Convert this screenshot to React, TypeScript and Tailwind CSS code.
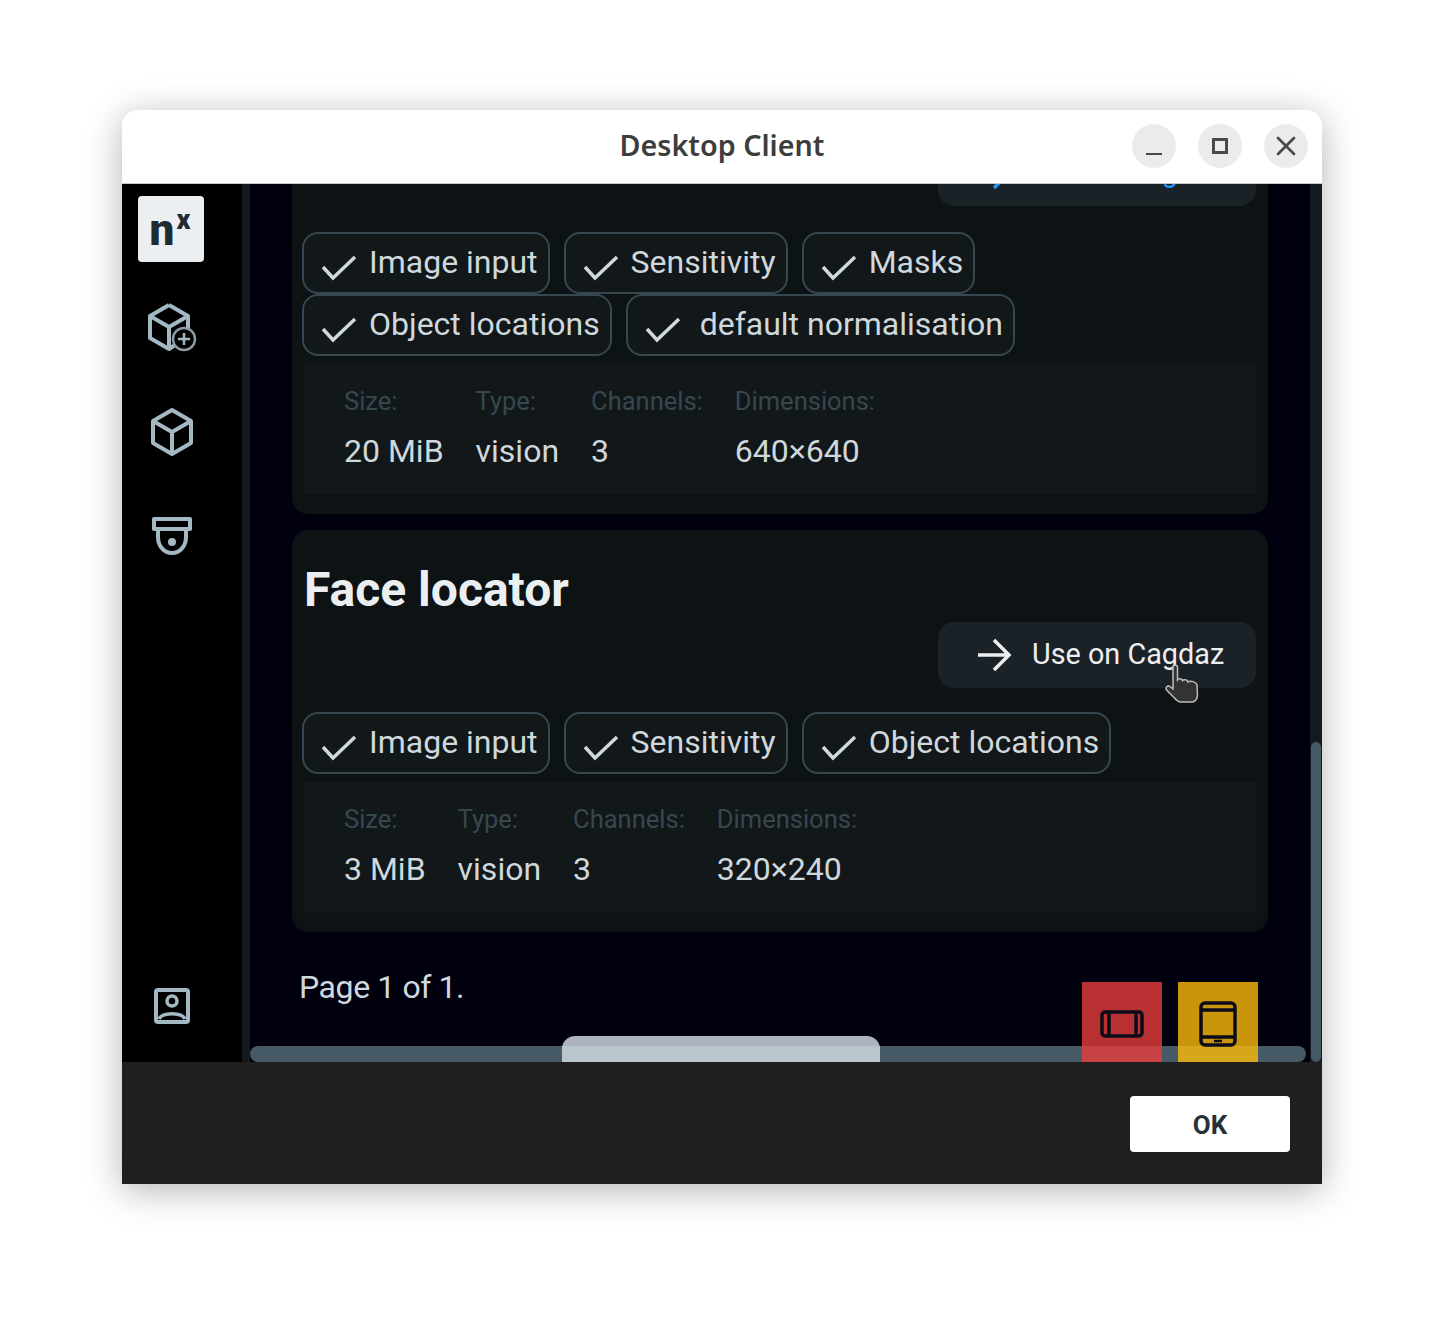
import React from 'react';
import { X } from 'lucide-react';

const FONT = { fontFamily: 'Roboto, sans-serif' };

const CheckMark = () => (
  <svg width="36" height="28" viewBox="0 0 36 28" fill="none" className="mt-[20px] shrink-0">
    <path d="M2 13 L12 24 L34 3" stroke="#cfd8dc" strokeWidth="3.5" />
  </svg>
);

const Arrow = ({ color }: { color: string }) => (
  <svg width="36" height="36" viewBox="0 0 36 36" fill="none" className="shrink-0">
    <path d="M2 18 H33 M18 3 L33 18 L18 33" stroke={color} strokeWidth="3.5" />
  </svg>
);

const Tag = ({ label, wide }: { label: string; wide?: boolean }) => (
  <div className="flex h-[62px] items-start rounded-[16px] border-2 border-[#37474f] bg-[#12171a] pl-[17px] pr-[10px]">
    <CheckMark />
    <span className={`mt-[6px] text-[32px] leading-[44px] text-[#cfd8dc] ${wide ? 'ml-[19px]' : 'ml-[12px]'}`}>{label}</span>
  </div>
);

const UseButton = ({ color, cursor }: { color: string; cursor?: boolean }) => (
  <div className="relative flex h-[66px] w-[318px] items-center gap-[20px] rounded-[16px] bg-[#1a2227] pl-[38px]">
    <Arrow color={color} />
    <span className="text-[28.8px]" style={{ color }}>Use on Cagdaz</span>
    {cursor && (
      <svg width="36" height="40" viewBox="0 0 36 40" className="absolute left-[226px] top-[42px]">
        <path
          d="M9 3 C9 0.5 13.5 0.5 13.5 3 V16 C15 14 18 14.5 18.5 16.5 C20 15 23.5 15.5 24 18 C26 16.5 32 17.5 33 21 L33.500 31 C33.500 35 31 38 28 38 H17 C14 38 12 36 10 33.500 L2.500 26 C1 23.500 3.500 21 6 22.500 L9 25 Z"
          fill="#333333"
          stroke="#bdbdbd"
          strokeWidth="1.5"
        />
      </svg>
    )}
  </div>
);

const ModelCard = ({ title, btnColor, cursor, tagsGap, tags, specs }: {
  title: string;
  btnColor: string;
  cursor?: boolean;
  tagsGap: string;
  tags: { label: string; wide?: boolean }[];
  specs: string[][];
}) => (
  <div className="flex w-[976px] flex-col rounded-[16px] bg-[#0d1214] px-[12px] pb-[20px] pt-[30px]">
    <h2 className="h-[62px] text-[48px] font-bold leading-[60px] text-[#eceff1]">{title}</h2>
    <div className="flex justify-end">
      <UseButton color={btnColor} cursor={cursor} />
    </div>
    <div className={`-ml-[2px] flex flex-wrap gap-x-[14px] ${tagsGap}`}>
      {tags.map((t) => (
        <Tag key={t.label} label={t.label} wide={t.wide} />
      ))}
    </div>
    <div className="mt-[8px] flex h-[130px] gap-x-[32px] bg-[#12171a] pl-[40px] pt-[20px]">
      {specs.map(([k, v]) => (
        <div key={k} className="flex flex-col">
          <span className="text-[25.5px] leading-[34px] text-[#37474f]">{k}</span>
          <span className="mt-[11px] text-[32px] leading-[44px] text-[#cfd8dc]">{v}</span>
        </div>
      ))}
    </div>
  </div>
);

const Sidebar = () => (
  <aside className="flex w-[120px] shrink-0 flex-col items-center bg-black pb-[38px] pr-[22px] pt-[12px]">
    <div className="flex h-[66px] w-[66px] items-start justify-center rounded-[4px] bg-[#eceff1] pr-[2px]" style={FONT}>
      <span className="mt-[6px] text-[44px] font-black leading-[56px] text-[#1f2b30]">n</span>
      <span className="ml-[2px] mt-[12px] text-[27px] font-black leading-[24px] text-[#1f2b30]">x</span>
    </div>
    <svg width="52" height="50" viewBox="0 0 52 50" fill="none" stroke="#a4b8c4" strokeWidth="4" className="ml-[4px] mt-[40px]">
      <path d="M22 3 L41 14 V28 M22 47 L3 36 V14 L22 3 M3 14 L22 25 L41 14 M22 25 V47 L28 43" strokeLinejoin="round" />
      <circle cx="37" cy="37" r="11" fill="#000" stroke="#8a9ba5" strokeWidth="2.500" />
      <path d="M37 31 V43 M31 37 H43" strokeWidth="2.500" />
    </svg>
    <svg width="46" height="50" viewBox="0 0 46 50" fill="none" stroke="#a4b8c4" strokeWidth="4" className="ml-[2px] mt-[55px]" strokeLinejoin="round">
      <path d="M23 3 L42 14 V36 L23 47 L4 36 V14 Z M4 14 L23 25 L42 14 M23 25 V47" />
    </svg>
    <svg width="42" height="38" viewBox="0 0 42 38" fill="none" stroke="#a4b8c4" strokeWidth="4" className="ml-[2px] mt-[60px]" strokeLinejoin="round">
      <path d="M3 2 H39 V12 H3 Z" />
      <path d="M7 12 V20 C7 29 13 36 21 36 C29 36 35 29 35 20 V12" />
      <circle cx="21" cy="25" r="4" fill="#a4b8c4" stroke="none" />
    </svg>
    <div className="flex-1" />
    <svg width="36" height="36" viewBox="0 0 36 36" fill="none" stroke="#a4b8c4" strokeWidth="4" className="ml-[2px]">
      <rect x="2" y="2" width="32" height="32" rx="2" />
      <circle cx="18" cy="13" r="5" strokeWidth="3.500" />
      <path d="M5 31 C8 24 28 24 31 31" strokeWidth="3.500" />
    </svg>
  </aside>
);

const tagsA = [
  { label: 'Image input' },
  { label: 'Sensitivity' },
  { label: 'Masks' },
  { label: 'Object locations' },
  { label: 'default normalisation', wide: true },
];

const tagsB = [{ label: 'Image input' }, { label: 'Sensitivity' }, { label: 'Object locations' }];

const App = () => {
  return (
    <div className="h-[1318px] w-[1444px] overflow-hidden bg-white pl-[122px] pt-[110px]" style={FONT}>
      <div className="flex h-[1074px] w-[1200px] flex-col overflow-hidden rounded-t-[16px] shadow-[0_6px_36px_rgba(0,0,0,0.3)]">
        {/* TITLE BAR */}
        <header className="relative flex h-[74px] shrink-0 items-center justify-center border-b border-[#c8c8c8] bg-white pb-[4px]">
          <span className="text-[28.7px] font-semibold text-[#3d3d3d]" style={{ fontFamily: '"Noto Sans", sans-serif' }}>Desktop Client</span>
          <div className="absolute right-[14px] top-[14px] flex gap-[22px]">
            <div className="flex h-[44px] w-[44px] items-end justify-center rounded-full bg-[#ebebeb] pb-[13px]">
              <div className="h-[2px] w-[16px] bg-[#4a4a4a]" />
            </div>
            <div className="flex h-[44px] w-[44px] items-center justify-center rounded-full bg-[#ebebeb]">
              <div className="h-[16px] w-[16px] border-[3px] border-[#4a4a4a]" />
            </div>
            <div className="flex h-[44px] w-[44px] items-center justify-center rounded-full bg-[#ebebeb]">
              <X size={32} strokeWidth={2} color="#4a4a4a" />
            </div>
          </div>
        </header>

        <div className="flex h-[878px] shrink-0">
          <Sidebar />
          <div className="w-[8px] shrink-0 bg-[#13191c]" />

          {/* SCROLLED CONTENT */}
          <main className="relative flex-1 overflow-hidden bg-[#00000f]">
            <div className="-mt-[136px] flex flex-col gap-[16px] pl-[42px]">
              <ModelCard
                title=""
                btnColor="#2196f3"
                tagsGap="mt-[26px]"
                tags={tagsA}
                specs={[['Size:', '20 MiB'], ['Type:', 'vision'], ['Channels:', '3'], ['Dimensions:', '640×640']]}
              />
              <ModelCard
                title="Face locator"
                btnColor="#eceff1"
                cursor
                tagsGap="mt-[24px]"
                tags={tagsB}
                specs={[['Size:', '3 MiB'], ['Type:', 'vision'], ['Channels:', '3'], ['Dimensions:', '320×240']]}
              />
            </div>
            <p className="ml-[49px] mt-[33px] text-[32px] leading-[44px] tracking-[-0.4px] text-[#cfd8dc]">Page 1 of 1.</p>

            {/* horizontal scrollbar */}
            <div className="absolute bottom-0 left-0 h-[16px] w-[1056px] rounded-[8px] bg-[#455a64]" />
            <div className="absolute bottom-0 left-[312px] flex h-[26px] w-[318px] flex-col justify-end overflow-hidden rounded-t-[13px] bg-[#adb3bf]">
              <div className="h-[16px] bg-[#b9c6cc]" />
            </div>

            {/* adaptive viewport markers */}
            <div className="absolute bottom-0 left-[832px] flex h-[80px] w-[80px] items-center justify-center bg-[#e63c39]/80 pt-[4px]">
              <svg width="44" height="28" viewBox="0 0 44 28" fill="none" stroke="#0b0b1a" strokeWidth="3.500" strokeLinejoin="round">
                <rect x="2" y="2" width="40" height="24" rx="3" />
                <path d="M9 2 V26 M36 2 V26" />
              </svg>
            </div>
            <div className="absolute bottom-0 left-[928px] flex h-[80px] w-[80px] items-center justify-center bg-[#fbba09]/80 pt-[4px]">
              <svg width="38" height="46" viewBox="0 0 38 46" fill="none" stroke="#0b0b1a" strokeWidth="3.500" strokeLinejoin="round">
                <rect x="2" y="2" width="34" height="42" rx="4" />
                <path d="M2 9 H36 M2 36 H36" />
                <path d="M15 40 H23" strokeWidth="2.500" />
              </svg>
            </div>
          </main>

          {/* vertical scrollbar */}
          <div className="flex w-[12px] shrink-0 flex-col justify-end bg-[#13191c] pl-[1px] pr-[1px]">
            <div className="h-[320px] rounded-[6px] bg-[#455a64]" />
          </div>
        </div>

        {/* FOOTER */}
        <footer className="flex flex-1 items-center justify-end bg-[#1f1f1f] pr-[32px]">
          <button className="mt-[2px] flex h-[56px] w-[160px] items-center justify-center rounded-[4px] bg-white pt-[2px] text-[26px] font-bold text-[#263238]">OK</button>
        </footer>
      </div>
    </div>
  );
};

export default App;
